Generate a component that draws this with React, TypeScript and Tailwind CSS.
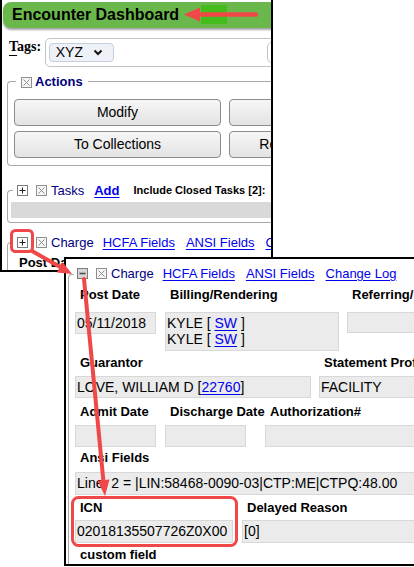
import React from 'react';

const line = 'border-[#a9a9a9]';

const PlusBox = () => (
  <svg width="11" height="11" viewBox="0 0 11 11" className="shrink-0">
    <rect x="0.5" y="0.5" width="10" height="10" fill="#fff" stroke="#7c7c7c" />
    <path d="M5.5 2.5v6M2.5 5.5h6" stroke="#222" strokeWidth="1" />
  </svg>
);

const MinusBox = () => (
  <svg width="11" height="11" viewBox="0 0 11 11" className="shrink-0">
    <rect x="0.5" y="0.5" width="10" height="10" fill="#d6d6d6" stroke="#7c7c7c" />
    <path d="M2.5 5.5h6" stroke="#444" strokeWidth="1.5" />
  </svg>
);

const XBox = () => (
  <svg width="11" height="11" viewBox="0 0 11 11" className="shrink-0">
    <rect x="0.5" y="0.5" width="10" height="10" fill="#f6f6f6" stroke="#8e8e8e" />
    <path d="M2.5 2.5l6 6M8.5 2.5l-6 6" stroke="#8e8e8e" strokeWidth="1" />
  </svg>
);

// Hand-built fieldset so the legend gap and corners are predictable
const Fieldset: React.FC<{
  rowClass: string;
  lineClass: string;
  startClass: string;
  legendClass: string;
  bodyClass: string;
  legend: React.ReactNode;
  children?: React.ReactNode;
}> = ({ rowClass, lineClass, startClass, legendClass, bodyClass, legend, children }) => (
  <div>
    <div className={`flex ${rowClass}`}>
      <div className={`${startClass} ${lineClass} border-t border-l ${line} rounded-tl-[4px]`} />
      <div className={`flex items-center ${legendClass}`}>{legend}</div>
      <div className={`flex-1 ${lineClass} border-t border-r ${line} rounded-tr-[4px]`} />
    </div>
    <div className={`border-l border-r border-b ${line} rounded-b-[4px] ${bodyClass}`}>{children}</div>
  </div>
);

const Btn: React.FC<{ label: string }> = ({ label }) => (
  <div className="h-[27px] rounded-[4px] border border-[#8c8c8c] bg-gradient-to-b from-[#f6f6f6] to-[#e3e3e3] flex items-center justify-center text-[14px] text-black whitespace-nowrap overflow-hidden">
    {label}
  </div>
);

const Link: React.FC<{ children: React.ReactNode; className?: string }> = ({ children, className = '' }) => (
  <span className={`text-[#0000ee] underline underline-offset-[2px] whitespace-nowrap ${className}`}>{children}</span>
);

const Label: React.FC<{ children: React.ReactNode }> = ({ children }) => (
  <div className="pl-[5px] text-[13px] leading-4 font-bold text-black whitespace-nowrap">{children}</div>
);

const Box: React.FC<{ className: string; children?: React.ReactNode }> = ({ className, children }) => (
  <div className={`bg-[#ebebeb] border border-[#d8d8d8] pl-[1px] text-[14px] text-black whitespace-nowrap overflow-hidden ${className}`}>
    {children}
  </div>
);

const ChargeLegend: React.FC<{ open?: boolean }> = ({ open }) => (
  <>
    {open ? <MinusBox /> : <PlusBox />}
    <span className="ml-[8px]"><XBox /></span>
    <span className="ml-[4px] text-[13px] text-[#000080] whitespace-nowrap">Charge</span>
    <Link className="ml-[9px] text-[13px]">HCFA Fields</Link>
    <Link className="ml-[11px] text-[13px]">ANSI Fields</Link>
    <Link className="ml-[11px] text-[13px]">Change Log</Link>
  </>
);

export default function App() {
  return (
    <div className="relative w-[414px] h-[567px] overflow-hidden bg-white font-['Liberation_Sans',Arial,sans-serif]">
      {/* first screenshot */}
      <div className="absolute left-0 top-0 w-[273px] h-[272px] border-l-2 border-r-2 border-b-2 border-black overflow-hidden bg-white">
        <div className="w-[440px]">
          <div className="relative mt-[2px] ml-[1px] h-[26px] rounded-l-[8px] bg-[#6ab84c] shadow-[0_2px_2px_rgba(0,0,0,0.35)] flex items-center pl-[9px]">
            <span className="text-[16px] font-bold text-black">Encounter Dashboard</span>
            <div className="absolute left-[198px] top-[3px] w-[26px] h-[19px] bg-[#45bb1c]" />
          </div>

          <div className="mt-[10px] flex items-start">
            <div className="ml-[7px] mt-[1px] w-[36px] font-['Liberation_Serif',serif] font-bold text-[14px] leading-4 text-black">
              <span className="underline underline-offset-[4px]">T</span>ags:
            </div>
            <div className="h-[29px] w-[400px] border border-[#c4c4c4] rounded-[5px] flex items-start pt-[4px] pl-[3px]">
              <div className="h-[19px] w-[65px] rounded-[4px] border border-[#c5cedb] bg-[#eef2f8] flex items-center pl-[6px]">
                <span className="text-[14px] text-black">XYZ</span>
                <svg width="10" height="7" viewBox="0 0 10 7" className="ml-[10px]">
                  <path d="M1.5 1.5l3.5 3.5 3.5-3.5" fill="none" stroke="#111" strokeWidth="2" />
                </svg>
              </div>
              <div className="ml-[153px] -mt-[1px] h-[21px] w-[60px] rounded-[5px] border border-[#c4c4c4]" />
            </div>
          </div>

          <div className="mt-[8px] ml-[5px]">
            <Fieldset
              rowClass="h-[14px]"
              lineClass="mt-[6px]"
              startClass="w-[9px]"
              legendClass="px-[5px]"
              bodyClass="pt-[10px] pb-[7px] pl-[6px]"
              legend={
                <>
                  <XBox />
                  <span className="ml-[3px] text-[13px] font-bold text-[#000080]">Actions</span>
                </>
              }
            >
              <div className="grid grid-cols-[207px_207px] gap-x-[8px] gap-y-[5px]">
                <Btn label="Modify" />
                <Btn label="Void" />
                <Btn label="To Collections" />
                <Btn label="Return from Collections" />
              </div>
            </Fieldset>
          </div>

          <div className="mt-[17px] ml-[5px]">
            <Fieldset
              rowClass="h-[15px]"
              lineClass="mt-[7px]"
              startClass="w-[6px]"
              legendClass="pl-[4px] pr-[4px]"
              bodyClass="pt-[4px] pb-[4px] pl-[3px]"
              legend={
                <>
                  <PlusBox />
                  <span className="ml-[8px]"><XBox /></span>
                  <span className="ml-[4px] text-[13px] text-[#000080]">Tasks</span>
                  <Link className="ml-[10px] text-[13px] font-bold">Add</Link>
                  <span className="ml-[14px] text-[11px] font-bold text-black whitespace-nowrap">Include Closed Tasks [2]:</span>
                  <span className="ml-[6px] w-[11px] h-[11px] border border-[#8e8e8e] bg-[#f4f4f4]" />
                </>
              }
            >
              <div className="h-[16px] bg-[#d9d9d9]" />
            </Fieldset>
          </div>

          <div className="mt-[12px] ml-[5px]">
            <Fieldset
              rowClass="h-[15px]"
              lineClass="mt-[7px]"
              startClass="w-[6px]"
              legendClass="pl-[4px] pr-[4px]"
              bodyClass="pt-[5px] pl-[11px] h-[40px]"
              legend={<ChargeLegend />}
            >
              <div className="text-[13px] leading-4 font-bold text-black">Post Date</div>
            </Fieldset>
          </div>
        </div>
      </div>

      {/* zoomed second screenshot */}
      <div className="absolute left-[64px] top-[257px] w-[352px] h-[309px] border-2 border-black overflow-hidden bg-white">
        <div className="w-[420px] ml-[2px] mt-[7px]">
          <Fieldset
            rowClass="h-[15px]"
            lineClass="mt-[8px]"
            startClass="w-[6px]"
            legendClass="pl-[3px] pr-[40px]"
            bodyClass="pt-[6px] pl-[6px] h-[300px]"
            legend={<ChargeLegend open />}
          >
            <div className="flex">
              <div className="w-[81px]">
                <Label>Post Date</Label>
                <Box className="mt-[9px] h-[22px] flex items-center">05/11/2018</Box>
              </div>
              <div className="w-[174px] ml-[9px]">
                <Label>Billing/Rendering</Label>
                <Box className="mt-[9px] h-[39px] pt-[2px] leading-4">
                  <div>KYLE [ <Link>SW</Link> ]</div>
                  <div>KYLE [ <Link>SW</Link> ]</div>
                </Box>
              </div>
              <div className="w-[120px] ml-[8px]">
                <Label>Referring/Supervising</Label>
                <Box className="mt-[9px] h-[21px]" />
              </div>
            </div>

            <div className="flex mt-[4px]">
              <div className="w-[236px]">
                <Label>Guarantor</Label>
                <Box className="mt-[5px] h-[22px] flex items-center">
                  LOVE, WILLIAM D [<Link>22760</Link>]
                </Box>
              </div>
              <div className="w-[120px] ml-[8px]">
                <Label>Statement Profile</Label>
                <Box className="mt-[5px] h-[22px] flex items-center">FACILITY</Box>
              </div>
            </div>

            <div className="flex mt-[6px]">
              <div className="w-[81px]">
                <Label>Admit Date</Label>
                <Box className="mt-[5px] h-[22px]" />
              </div>
              <div className="w-[81px] ml-[9px]">
                <Label>Discharge Date</Label>
                <Box className="mt-[5px] h-[22px]" />
              </div>
              <div className="w-[160px] ml-[19px]">
                <Label>Authorization#</Label>
                <Box className="mt-[5px] h-[22px]" />
              </div>
            </div>

            <div className="mt-[3px]">
              <Label>Ansi Fields</Label>
              <Box className="mt-[6px] h-[23px] w-[400px] flex items-center whitespace-pre">
                Line  2 = |LIN:58468-0090-03|CTP:ME|CTPQ:48.00
              </Box>
            </div>

            <div className="flex mt-[5px]">
              <div className="w-[158px]">
                <Label>ICN</Label>
                <Box className="mt-[4px] h-[23px] flex items-center">02018135507726Z0X00</Box>
              </div>
              <div className="w-[200px] ml-[9px]">
                <Label>Delayed Reason</Label>
                <Box className="mt-[4px] h-[23px] flex items-center">[0]</Box>
              </div>
            </div>

            <div className="mt-[4px]">
              <Label>custom field</Label>
            </div>
          </Fieldset>
        </div>
      </div>

      {/* red annotations */}
      <svg className="absolute left-0 top-0 pointer-events-none" width="414" height="567" viewBox="0 0 414 567">
        <line x1="199" y1="14.5" x2="256" y2="14.5" stroke="#f04848" strokeWidth="4.5" strokeLinecap="round" />
        <polygon points="184,14.5 200,7.5 200,21.5" fill="#f04848" />
        <rect x="11.5" y="230.5" width="21" height="21" rx="4" fill="none" stroke="#f04848" strokeWidth="3" />
        <line x1="32" y1="251" x2="61" y2="267.5" stroke="#f04848" strokeWidth="4" strokeLinecap="round" />
        <polygon points="72,274 56.8,272.5 62.6,261.9" fill="#f04848" />
        <rect x="72.5" y="497.5" width="164" height="48" rx="6" fill="none" stroke="#f04848" strokeWidth="3" />
        <line x1="84" y1="279" x2="103.5" y2="482" stroke="#f04848" strokeWidth="4" strokeLinecap="round" />
        <polygon points="105,496 109.5,479.5 97.5,480.7" fill="#f04848" />
      </svg>
    </div>
  );
}
